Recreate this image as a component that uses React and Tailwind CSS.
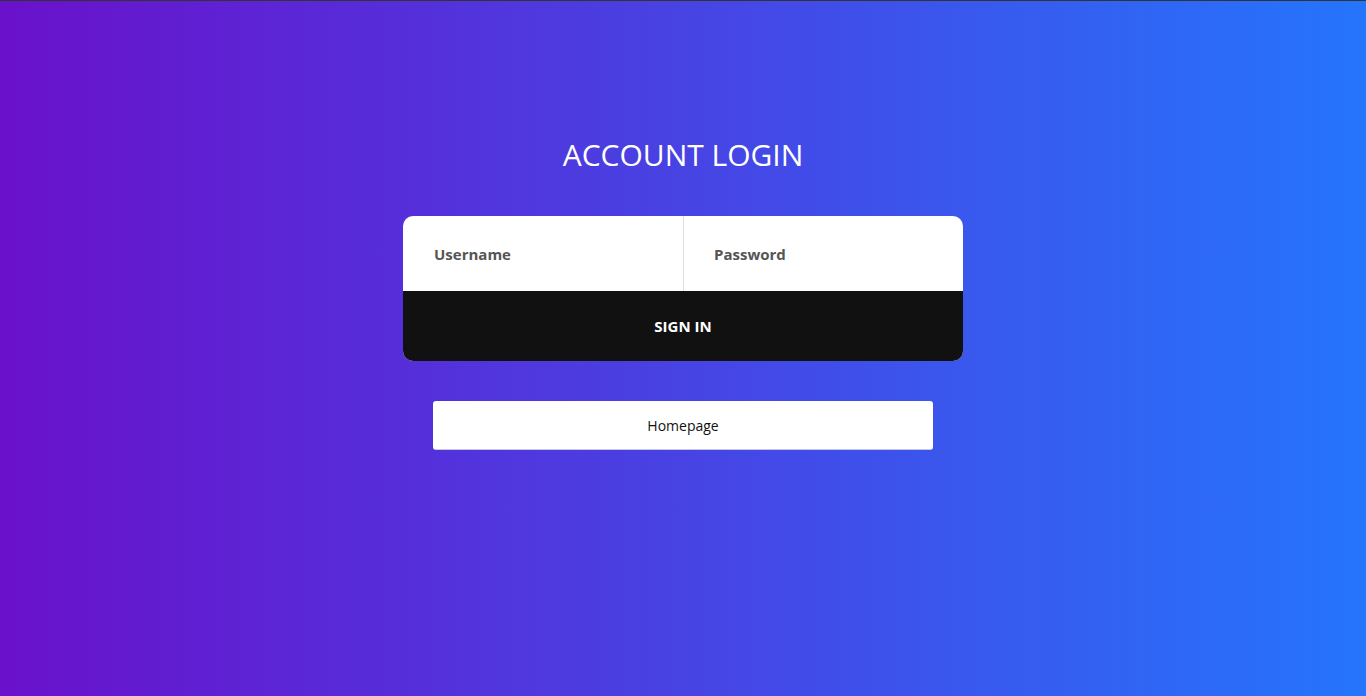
export default function App() {
  return (
    <div
      className="min-h-[696px] w-full border-t border-[#333] bg-[linear-gradient(to_right,#6a11cb,#2575fc)] flex flex-col items-center"
      style={{ fontFamily: '"Open Sans", "Liberation Sans", sans-serif' }}
    >
      <h1 className="mt-[134px] text-[30px] leading-[40px] text-white font-normal">ACCOUNT LOGIN</h1>
      <form
        className="mt-[41px] w-[560px] rounded-[10px] overflow-hidden bg-white"
        onSubmit={(e) => e.preventDefault()}
      >
        <div className="flex h-[75px]">
          <input
            type="text"
            placeholder="Username"
            className="w-[281px] h-full pl-[31px] pr-[20px] text-[15px] font-bold text-[#555] placeholder:text-[#555] outline-none border-r border-[#e0e0e0]"
          />
          <input
            type="password"
            placeholder="Password"
            className="flex-1 min-w-0 h-full pl-[30px] pr-[20px] text-[15px] font-bold text-[#555] placeholder:text-[#555] outline-none"
          />
        </div>
        <button
          type="submit"
          className="w-full h-[70px] bg-[#111] text-white text-[15px] font-bold uppercase"
        >
          Sign in
        </button>
      </form>
      <button className="mt-[40px] w-[500px] h-[49px] bg-white rounded-[3px] border-b border-[#c8c8d8] text-[14px] text-[#111]">
        Homepage
      </button>
    </div>
  );
}
